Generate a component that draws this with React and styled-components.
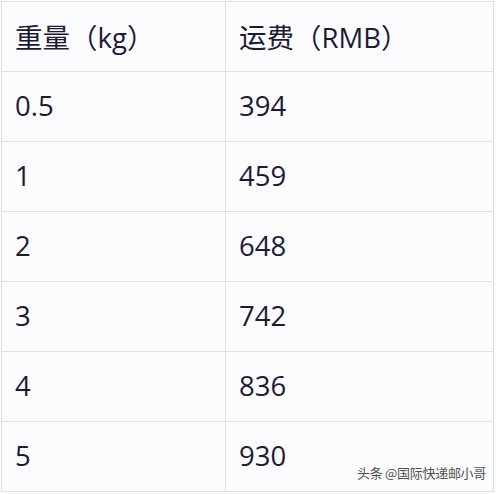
import React from 'react';
import styled, { createGlobalStyle } from 'styled-components';

const Global = createGlobalStyle`
  html, body {
    margin: 0;
    padding: 0;
    background: #fbfcfe;
  }
  body {
    font-family: "Open Sans", "Noto Sans CJK SC", sans-serif;
  }
`;

const Page = styled.div`
  position: relative;
  width: 496px;
  height: 494px;
  padding: 1px 0 0 1px;
  box-sizing: border-box;
  overflow: hidden;
`;

const Table = styled.div`
  display: grid;
  grid-template-columns: 224px 268px;
  border-top: 1px solid #dcdfe4;
  border-left: 1px solid #dcdfe4;
  width: 493px;
  box-sizing: border-box;
`;

const Cell = styled.div`
  height: 70px;
  box-sizing: border-box;
  border-right: 1px solid #dcdfe4;
  border-bottom: 1px solid #dcdfe4;
  display: flex;
  align-items: center;
  padding: 0 0 2px 13px;
  font-size: 27.5px;
  font-weight: 400;
  color: #1d1a36;
`;

const Watermark = styled.div`
  position: absolute;
  right: 10px;
  bottom: 12px;
  font-family: "Noto Sans CJK SC", sans-serif;
  font-size: 13px;
  letter-spacing: -0.3px;
  color: #505050;
  text-shadow: 0 0 2px #fff, 0 0 1px #fff;
`;

const rows = [
  ['0.5', '394'],
  ['1', '459'],
  ['2', '648'],
  ['3', '742'],
  ['4', '836'],
  ['5', '930'],
];

export default function App() {
  return (
    <>
      <Global />
      <Page>
        <Table>
          <Cell>重量（kg）</Cell>
          <Cell>运费（RMB）</Cell>
          {rows.map(([w, p]) => (
            <React.Fragment key={w}>
              <Cell>{w}</Cell>
              <Cell>{p}</Cell>
            </React.Fragment>
          ))}
        </Table>
        <Watermark>头条 @国际快递邮小哥</Watermark>
      </Page>
    </>
  );
}
